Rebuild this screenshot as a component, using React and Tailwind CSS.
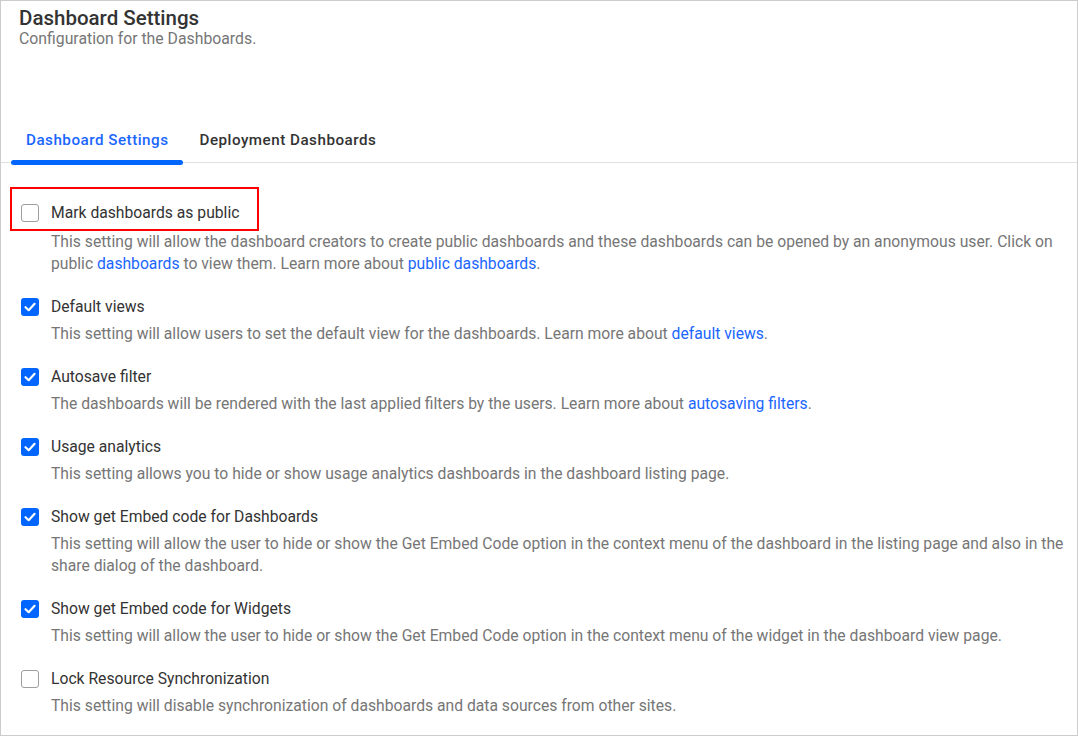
import React from "react";

const A = ({ children }) => <span className="text-[#1a66ff]">{children}</span>;

function Box({ checked }) {
  if (checked) {
    return (
      <span className="flex h-[18px] w-[18px] shrink-0 items-center justify-center rounded-[3px] bg-[#0066ff]">
        <svg width="14" height="14" viewBox="0 0 14 14" fill="none">
          <path d="M2.5 7.2 L5.7 10.2 L11.6 3.8" stroke="white" strokeWidth="2.2" strokeLinecap="round" strokeLinejoin="round" />
        </svg>
      </span>
    );
  }
  return <span className="block h-[18px] w-[18px] shrink-0 rounded-[3px] border border-[#9e9e9e] bg-white" />;
}

function Row({ checked, label, children, highlight }) {
  return (
    <div className="relative">
      {highlight && (
        <div className="pointer-events-none absolute left-[9px] top-[-15px] h-[44px] w-[249px] border-2 border-[#ff0000]" />
      )}
      <div className="flex items-center gap-[12px] pl-[20px]">
        <Box checked={checked} />
        <span className="whitespace-nowrap text-[15.7px] leading-[22px] text-[#333333]">{label}</span>
      </div>
      <div className={(highlight ? "mt-[7px] " : "mt-[5px] ") + "pl-[50px] text-[15.7px] leading-[22px] text-[#767676]"}>{children}</div>
    </div>
  );
}

export default function App() {
  return (
    <div className="h-[736px] w-[1078px] overflow-hidden border border-[#cccccc] bg-white" style={{ fontFamily: "Roboto, 'Liberation Sans', sans-serif" }}>
      <div className="pl-[18px] pt-[6px]">
        <div className="text-[20.5px] font-medium leading-[22px] text-[#333333]">Dashboard Settings</div>
        <div className="text-[15.8px] leading-[20px] text-[#767676]">Configuration for the Dashboards.</div>
      </div>
      <div className="mt-[81px] flex border-b border-[#e0e0e0] pl-[10px]">
        <div className="relative whitespace-nowrap px-[15px] pb-[12px] text-[15.2px] font-medium leading-[20px] tracking-[0.5px] text-[#1a66ff]">
          Dashboard Settings
          <span className="absolute bottom-[-3px] left-0 right-0 h-[5px] rounded-full bg-[#0066ff]" />
        </div>
        <div className="whitespace-nowrap px-[15px] pb-[12px] pl-[16px] text-[15.2px] font-medium leading-[20px] tracking-[0.5px] text-[#333333]">
          Deployment Dashboards
        </div>
      </div>
      <div className="mt-[39px] flex flex-col gap-[21px]">
        <Row highlight label="Mark dashboards as public">
          This setting will allow the dashboard creators to create public dashboards and these dashboards can be opened by an anonymous user. Click on
          <br />
          public <A>dashboards</A> to view them. Learn more about <A>public dashboards</A>.
        </Row>
        <Row checked label="Default views">
          This setting will allow users to set the default view for the dashboards. Learn more about <A>default views</A>.
        </Row>
        <Row checked label="Autosave filter">
          The dashboards will be rendered with the last applied filters by the users. Learn more about <A>autosaving filters</A>.
        </Row>
        <Row checked label="Usage analytics">
          This setting allows you to hide or show usage analytics dashboards in the dashboard listing page.
        </Row>
        <Row checked label="Show get Embed code for Dashboards">
          This setting will allow the user to hide or show the Get Embed Code option in the context menu of the dashboard in the listing page and also in the
          <br />
          share dialog of the dashboard.
        </Row>
        <Row checked label="Show get Embed code for Widgets">
          This setting will allow the user to hide or show the Get Embed Code option in the context menu of the widget in the dashboard view page.
        </Row>
        <Row label="Lock Resource Synchronization">
          This setting will disable synchronization of dashboards and data sources from other sites.
        </Row>
      </div>
    </div>
  );
}
